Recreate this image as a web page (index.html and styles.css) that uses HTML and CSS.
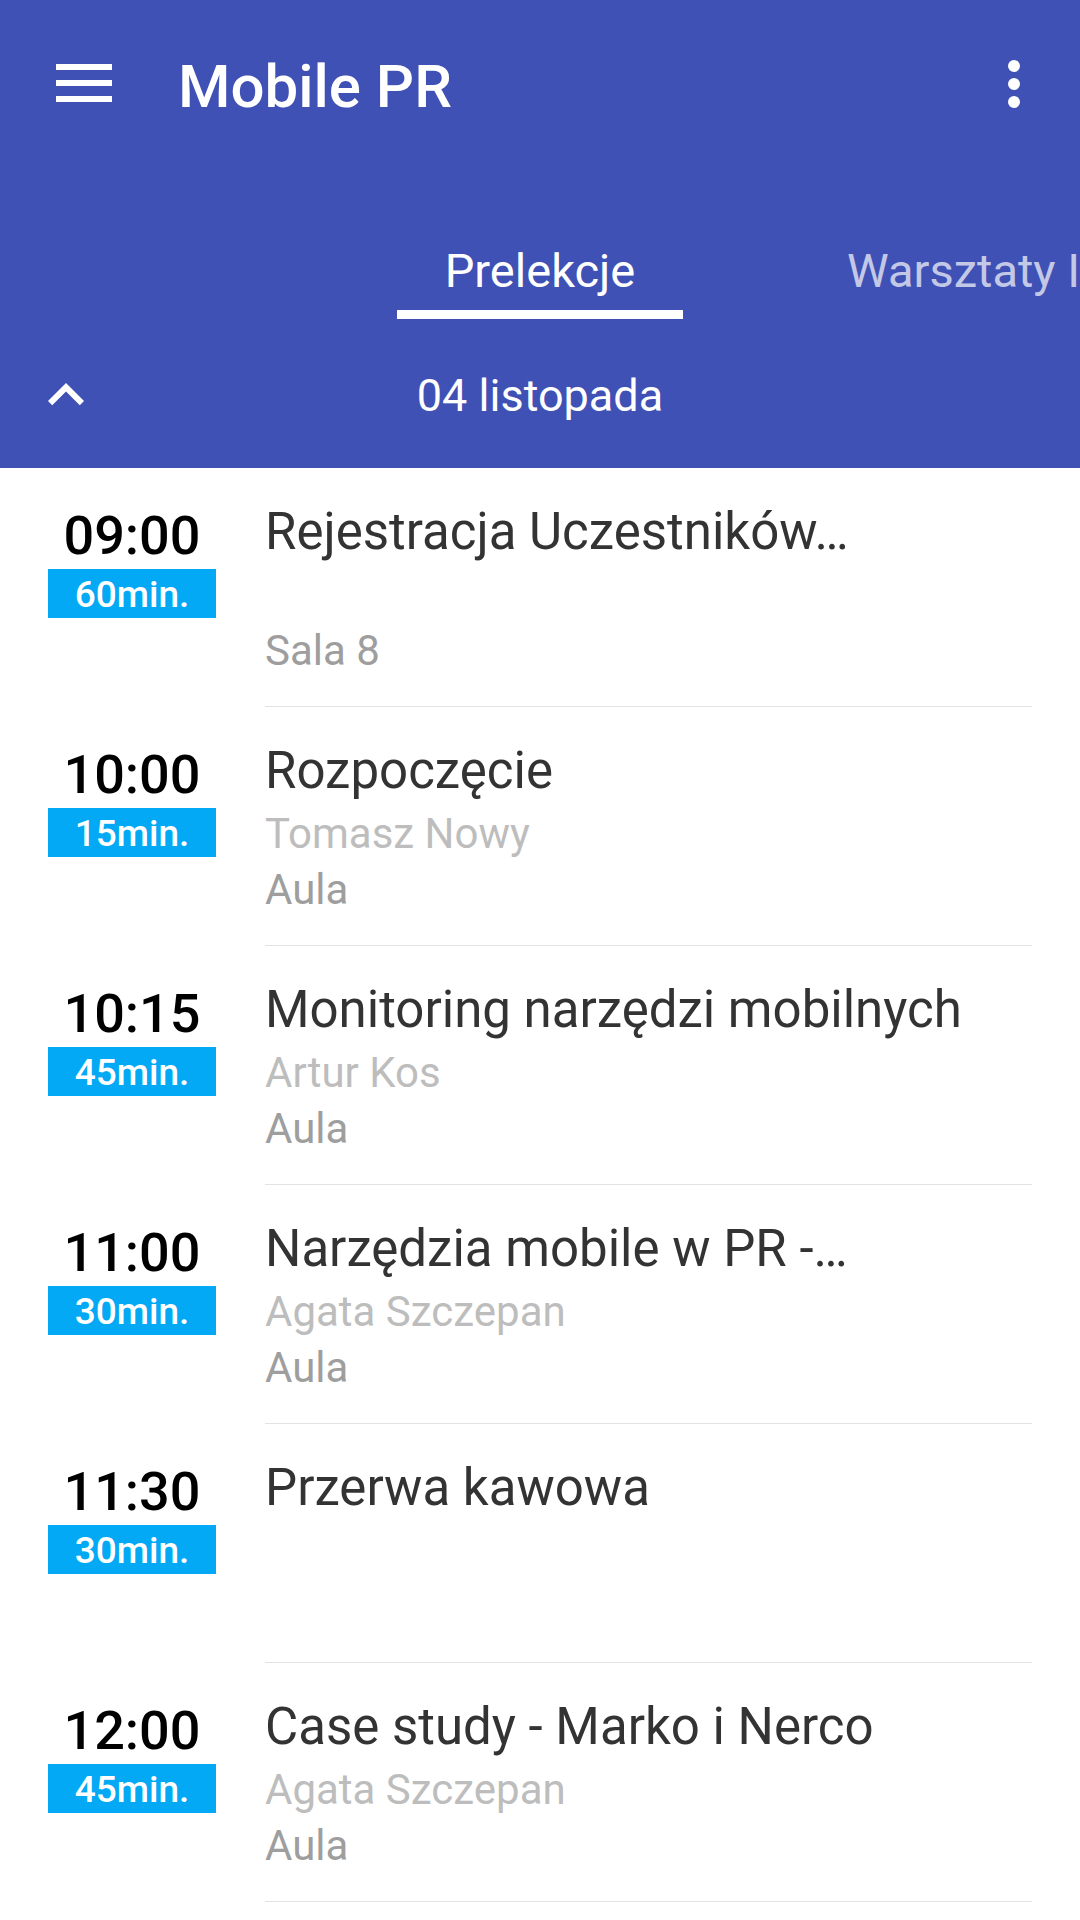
FILE: index.html
```html
<!DOCTYPE html>
<html lang="pl">
<head>
<meta charset="utf-8">
<title>Mobile PR</title>
<link rel="stylesheet" href="styles.css">
</head>
<body>
<div class="screen">
  <header class="appbar">
    <div class="toolbar">
      <svg class="menu-icon" width="56" height="38" viewBox="0 0 56 38" aria-hidden="true">
        <rect x="0" y="0" width="56" height="6" fill="#fff"/>
        <rect x="0" y="16" width="56" height="6" fill="#fff"/>
        <rect x="0" y="32" width="56" height="6" fill="#fff"/>
      </svg>
      <h1 class="title">Mobile PR</h1>
      <svg class="more-icon" width="12" height="48" viewBox="0 0 12 48" aria-hidden="true">
        <circle cx="6" cy="6" r="6" fill="#fff"/>
        <circle cx="6" cy="24" r="6" fill="#fff"/>
        <circle cx="6" cy="42" r="6" fill="#fff"/>
      </svg>
    </div>
    <nav class="tabs">
      <div class="tab tab-active">
        <span class="tab-label">Prelekcje</span>
        <span class="tab-indicator"></span>
      </div>
      <div class="tab tab-next">
        <span class="tab-label">Warsztaty IT</span>
      </div>
    </nav>
    <div class="date-row">
      <svg class="chevron" width="72" height="72" viewBox="0 0 24 24" aria-hidden="true">
        <path d="M12 8l-6 6 1.41 1.41L12 10.83l4.59 4.58L18 14z" fill="#fff"/>
      </svg>
      <span class="date">04 listopada</span>
      <span class="spacer"></span>
    </div>
  </header>

  <main class="list">
    <div class="row">
      <div class="time-col">
        <div class="time">09:00</div>
        <div class="badge">60min.</div>
      </div>
      <div class="info">
        <div class="talk">Rejestracja Uczestników…</div>
        <div class="speaker"></div>
        <div class="place">Sala 8</div>
      </div>
    </div>
    <div class="row">
      <div class="time-col">
        <div class="time">10:00</div>
        <div class="badge">15min.</div>
      </div>
      <div class="info">
        <div class="talk">Rozpoczęcie</div>
        <div class="speaker">Tomasz Nowy</div>
        <div class="place">Aula</div>
      </div>
    </div>
    <div class="row">
      <div class="time-col">
        <div class="time">10:15</div>
        <div class="badge">45min.</div>
      </div>
      <div class="info">
        <div class="talk">Monitoring narzędzi mobilnych</div>
        <div class="speaker">Artur Kos</div>
        <div class="place">Aula</div>
      </div>
    </div>
    <div class="row">
      <div class="time-col">
        <div class="time">11:00</div>
        <div class="badge">30min.</div>
      </div>
      <div class="info">
        <div class="talk">Narzędzia mobile w PR -…</div>
        <div class="speaker">Agata Szczepan</div>
        <div class="place">Aula</div>
      </div>
    </div>
    <div class="row">
      <div class="time-col">
        <div class="time">11:30</div>
        <div class="badge">30min.</div>
      </div>
      <div class="info">
        <div class="talk">Przerwa kawowa</div>
        <div class="speaker"></div>
        <div class="place"></div>
      </div>
    </div>
    <div class="row">
      <div class="time-col">
        <div class="time">12:00</div>
        <div class="badge">45min.</div>
      </div>
      <div class="info">
        <div class="talk">Case study - Marko i Nerco</div>
        <div class="speaker">Agata Szczepan</div>
        <div class="place">Aula</div>
      </div>
    </div>
  </main>
</div>
</body>
</html>
```

FILE: styles.css
```css
* {
  box-sizing: border-box;
}

html, body {
  margin: 0;
  padding: 0;
  background: #ffffff;
}

body {
  font-family: Roboto, "Noto Sans", "Liberation Sans", sans-serif;
  width: 1080px;
  height: 1920px;
  overflow: hidden;
}

.screen {
  width: 1080px;
  height: 1920px;
  overflow: hidden;
  background: #ffffff;
}

/* ---------- App bar ---------- */
.appbar {
  background: #3f51b5;
  color: #ffffff;
  height: 468px;
  display: flex;
  flex-direction: column;
}

.toolbar {
  height: 168px;
  display: flex;
  align-items: center;
  padding-left: 56px;
  padding-right: 60px;
}

.menu-icon {
  flex: none;
  margin-top: -2px;
}

.title {
  flex: 1;
  margin: 6px 0 0 66px;
  font-size: 60px;
  font-weight: 500;
  line-height: 70px;
  letter-spacing: 0;
  white-space: nowrap;
}

.more-icon {
  flex: none;
}

/* ---------- Tabs ---------- */
.tabs {
  height: 151px;
  display: flex;
  padding-left: 397px;
  overflow: hidden;
  white-space: nowrap;
}

.tab {
  flex: none;
  display: flex;
  flex-direction: column;
  padding-top: 75px;
}

.tab-active {
  width: 286px;
  align-items: center;
}

.tab-next {
  padding-left: 164px;
}

.tab-label {
  font-size: 47px;
  line-height: 56px;
  font-weight: 400;
}

.tab-active .tab-label {
  color: #ffffff;
}

.tab-next .tab-label {
  color: rgba(255, 255, 255, 0.7);
}

.tab-indicator {
  display: block;
  width: 100%;
  height: 9px;
  margin-top: 11px;
  background: #ffffff;
}

/* ---------- Date row ---------- */
.date-row {
  height: 149px;
  display: grid;
  grid-template-columns: 1fr auto 1fr;
  align-items: center;
  padding-top: 2px;
}

.chevron {
  justify-self: start;
  margin-left: 30px;
}

.date {
  font-size: 45px;
  line-height: 56px;
  font-weight: 400;
  padding-top: 2px;
}

/* ---------- List ---------- */
.list {
  display: flex;
  flex-direction: column;
}

.row {
  display: flex;
  height: 239px;
}

.time-col {
  flex: none;
  width: 168px;
  margin-left: 48px;
  padding-top: 36px;
  display: flex;
  flex-direction: column;
  align-items: stretch;
}

.time {
  font-size: 54px;
  line-height: 64px;
  font-weight: 500;
  color: #000000;
  text-align: center;
}

.badge {
  margin-top: 1px;
  height: 49px;
  padding-top: 2px;
  background: #03a9f4;
  color: #ffffff;
  font-size: 37px;
  line-height: 47px;
  font-weight: 500;
  text-align: center;
}

.info {
  flex: 1;
  margin-left: 49px;
  margin-right: 48px;
  padding-top: 30px;
  border-bottom: 1px solid #e3e3e3;
  overflow: hidden;
  white-space: nowrap;
}

.talk {
  font-size: 51px;
  line-height: 68px;
  height: 68px;
  color: #333333;
}

.speaker {
  font-size: 42px;
  line-height: 58px;
  height: 58px;
  color: #bdbdbd;
}

.place {
  font-size: 42px;
  line-height: 54px;
  height: 54px;
  color: #9e9e9e;
}
```
